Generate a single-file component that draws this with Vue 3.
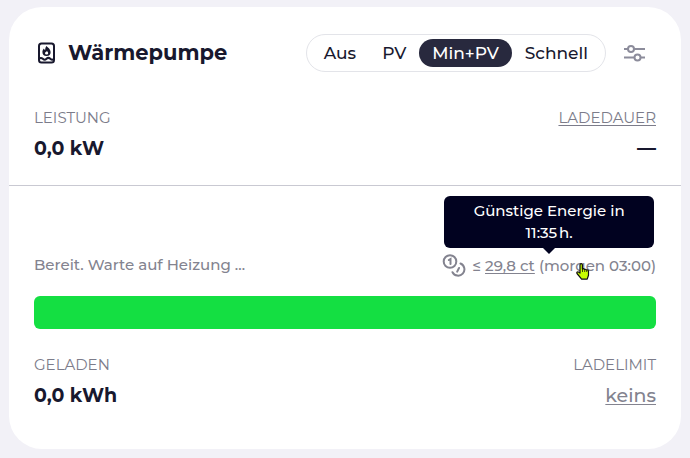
<script setup>
import { ref } from 'vue'

const modes = ['Aus', 'PV', 'Min+PV', 'Schnell']
const mode = ref('Min+PV')
const progress = ref(100)
</script>

<template>
  <main class="loadpoint">
    <header class="header">
      <h1 class="title">
        <svg class="device" viewBox="0 0 24 24" fill="none" stroke="currentColor" stroke-width="2" stroke-linejoin="round" aria-hidden="true">
          <rect x="5" y="2.500" width="15" height="19" rx="2.5" />
          <path d="M5 17.800c1.300-1.200 2.500-1.200 3.800 0s2.500 1.200 3.700 0 2.500-1.200 3.800 0 2.500 1.200 3.700 0" />
          <path fill="currentColor" stroke="none" fill-rule="evenodd" d="M12.300 5.100c1.800 1.300 4.300 3.600 4.300 5.800a4.100 4 0 0 1-8.200.2c0-1.500.7-2.800 1.500-3.500.2.800.6 1.200 1.200 1.500.1-1.500.4-2.800 1.200-4zm.5 4.800c-.3 1-1.800 1.200-1.800 2.300a1.600 1.300 0 0 0 3.200 0c0-.8-.6-1.700-1.400-2.300z" />
        </svg>
        <span>Wärmepumpe</span>
      </h1>
      <div class="modes" role="group" aria-label="Modus">
        <button
          v-for="m in modes"
          :key="m"
          type="button"
          class="mode"
          :class="{ active: m === mode }"
          :aria-pressed="m === mode"
          @click="mode = m"
        >{{ m }}</button>
      </div>
      <button type="button" class="settings" aria-label="Einstellungen">
        <svg viewBox="0 0 24 24" fill="none" stroke="currentColor" stroke-width="2" aria-hidden="true">
          <path d="M2 8H6M12 8h11M2 16.500H12M18 16.500h5" />
          <circle cx="9" cy="8" r="3" />
          <circle cx="15.500" cy="16.500" r="3" />
        </svg>
      </button>
    </header>

    <section class="facts power">
      <div>
        <div class="label">LEISTUNG</div>
        <div class="value">0,0 kW</div>
      </div>
      <div class="end">
        <a class="label" href="#duration">LADEDAUER</a>
        <div class="value">—</div>
      </div>
    </section>

    <section class="vehicle">
      <div class="status">
        <div>Bereit. Warte auf Heizung …</div>
        <div class="tariff">
          <svg class="coins" viewBox="0 0 24 24" fill="none" stroke="currentColor" stroke-width="2" stroke-linecap="round" aria-hidden="true">
            <circle cx="8" cy="7.500" r="6.300" />
            <path d="M6.800 6L8.500 5V10" />
            <path d="M18.500 9.500A6.300 6.300 0 1 1 10.500 18.200M17 14L15.200 17.600" />
          </svg>
          <span>≤ <a href="#limit">29,8 ct</a> (morgen 03:00)</span>
          <div class="tooltip" role="tooltip">Günstige Energie in 11:35&#8239;h.</div>
          <svg class="pointer" viewBox="0 0 14 17" aria-hidden="true">
            <path fill="#c8ff00" stroke="#111" stroke-width="1.200" stroke-linejoin="round" d="M4 10V2q0-1.300 1.200-1.300T6.400 2v4q1.400-.7 2 .4 1.500-.5 2 .6 2-.4 2.100 1.200v4l-1.300 3.900H5.600L1 10.500q-.5-1.500.8-1.600Q3 9 4 10z" />
            <path fill="none" stroke="#111" stroke-width=".8" d="M6.500 6v3M8.700 6.500V9M10.700 7.200V9" />
          </svg>
        </div>
      </div>
      <div class="track" role="progressbar" aria-label="Ladestand" :aria-valuenow="progress">
        <div class="fill" :style="{ width: progress + '%' }"></div>
      </div>
      <div class="facts">
        <div>
          <div class="label">GELADEN</div>
          <div class="value">0,0 kWh</div>
        </div>
        <div class="end">
          <div class="label">LADELIMIT</div>
          <a class="value none" href="#ladelimit">keins</a>
        </div>
      </div>
    </section>
  </main>
</template>

<style>
body {
  background: #f2f1f7;
}
</style>

<style scoped>
.loadpoint {
  margin: 7px 9px 9px;
  padding: 27px 0 39px;
  border-radius: 33px;
  background: #fff;
  color: #18182e;
  font: 500 15px/22px Montserrat, Inter, sans-serif;
}
.header {
  display: flex;
  align-items: center;
  padding: 0 35px 0 25px;
}
.title {
  display: flex;
  align-items: center;
  gap: 10px;
  margin: 0;
  flex: 1;
  font-size: 21px;
  line-height: 30px;
  font-weight: 700;
}
.device,
.coins {
  width: 24px;
  height: 24px;
}
.modes {
  display: flex;
  padding: 4px;
  border: 1px solid #e3e4e9;
  border-radius: 20px;
}
.mode {
  padding: 0 13px;
  border: 0;
  border-radius: 14px;
  background: none;
  color: inherit;
  font: inherit;
  font-size: 17px;
  line-height: 28px;
}
.mode.active {
  background: #28293e;
  color: #fff;
}
.settings {
  margin-left: 16px;
  padding: 0;
  border: 0;
  background: none;
  color: #8c8c9b;
}
.settings svg {
  display: block;
  width: 24px;
  height: 24px;
}
a {
  color: inherit;
  text-decoration-thickness: 1px;
  text-underline-offset: 2px;
}
.facts {
  display: flex;
  justify-content: space-between;
}
.power {
  padding: 35px 25px 22px;
  border-bottom: 1px solid #c9c9d2;
}
.end {
  text-align: right;
}
.label {
  display: block;
  color: #7c7c8a;
  font-weight: 400;
}
.value {
  display: block;
  margin-top: 6px;
  font-size: 19px;
  line-height: 28px;
  font-weight: 700;
}
.none {
  color: #83838f;
  font-weight: 500;
}
.vehicle {
  padding: 68px 25px 0;
}
.status {
  display: flex;
  align-items: flex-start;
  justify-content: space-between;
  color: #83838f;
}
.tariff {
  position: relative;
  display: flex;
  align-items: center;
  gap: 6px;
}
.tooltip {
  position: absolute;
  bottom: 30px;
  left: 2px;
  right: 2px;
  padding: 4px 28px;
  border-radius: 6px;
  background: #010220;
  color: #fff;
  text-align: center;
}
.tooltip::after {
  content: '';
  position: absolute;
  top: 100%;
  left: 50%;
  margin-left: -6px;
  border: 6px solid transparent;
  border-top-color: #010220;
  border-bottom: 0;
}
.pointer {
  position: absolute;
  right: 66px;
  top: 9px;
  width: 14px;
  height: 17px;
}
.track {
  height: 33px;
  margin: 18px 0 25px;
  border-radius: 6px;
  overflow: hidden;
  background: #e8e8ee;
}
.fill {
  height: 100%;
  background: #14df42;
}
</style>
